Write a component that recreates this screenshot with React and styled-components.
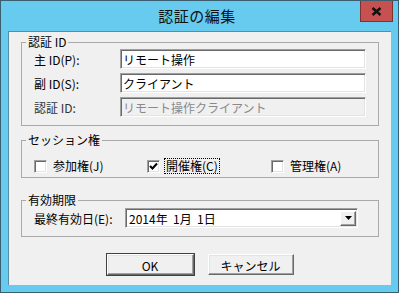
import React from 'react'
import styled, { createGlobalStyle } from 'styled-components'

const GlobalStyle = createGlobalStyle`
  html, body { margin: 0; padding: 0; background: #fff; }
  * { box-sizing: border-box; }
`

const UI = `"MS UI Gothic", "Noto Sans CJK JP", "Liberation Sans", sans-serif`

const Window = styled.div`
  width: 399px;
  height: 293px;
  border: 1px solid #3b5f70;
  background: #66cbee;
  padding: 0 7px 7px 7px;
  display: flex;
  flex-direction: column;
  font-family: ${UI};
  font-size: 12px;
  color: #000;
`

const TitleBar = styled.div`
  height: 30px;
  display: grid;
  grid-template-columns: 1fr auto 1fr;
  align-items: start;
  margin: 0 -2px 0 -7px;
`

const Title = styled.div`
  grid-column: 2;
  font-size: 15px;
  line-height: 30px;
  letter-spacing: 0.5px;
  color: #111;
`

const CloseButton = styled.div`
  grid-column: 3;
  justify-self: end;
  width: 33px;
  height: 21px;
  background: #c75050;
  border: 1px solid #7d3232;
  border-top: none;
  display: flex;
  align-items: center;
  justify-content: center;
`

const Client = styled.div`
  flex: 1;
  background: #f0f0f0;
  border-left: 1px solid #5a8ca0;
  border-top: 1px solid #5a8ca0;
  padding: 3px 12px 0 12px;
  display: flex;
  flex-direction: column;
`

const Group = styled.fieldset`
  margin: ${p => p.$top || 0}px 0 0 0;
  border: 1px solid #a9a9a9;
  padding: ${p => p.$pad};
  min-width: 0;
`

const Legend = styled.legend`
  padding: 0 2px;
  margin-left: -8px;
  line-height: 14px;
  font-size: 12px;
`

const FormGrid = styled.div`
  display: grid;
  grid-template-columns: ${p => p.$label}px 1fr;
  grid-auto-rows: 20px;
  row-gap: 4px;
  align-items: center;
`

const Label = styled.label`
  white-space: nowrap;
  padding-top: 1px;
  color: ${p => (p.$dim ? '#333' : '#000')};
`

const TextBox = styled.input`
  height: 20px;
  width: 100%;
  border: 1px solid;
  border-color: #a0a0a0 #fff #fff #a0a0a0;
  box-shadow: inset 1px 1px 0 #696969, inset -1px -1px 0 #e3e3e3;
  padding: 1px 2px 0 2px;
  font-family: ${UI};
  font-size: 12px;
  color: #000;
  background: #fff;
  outline: none;
  &:disabled {
    background: #f0f0f0;
    color: #8a8a8a;
    -webkit-text-fill-color: #8a8a8a;
  }
`

const CheckRow = styled.div`
  display: grid;
  grid-template-columns: 113px 124px 1fr;
  height: 20px;
  align-items: center;
`

const CheckItem = styled.label`
  display: flex;
  align-items: center;
  gap: 4px;
  white-space: nowrap;
`

const Box = styled.span`
  width: 13px;
  height: 13px;
  background: #fff;
  border: 1px solid;
  border-color: #a0a0a0 #fff #fff #a0a0a0;
  box-shadow: inset 1px 1px 0 #696969, inset -1px -1px 0 #e3e3e3;
  display: flex;
  align-items: center;
  justify-content: center;
`

const CheckText = styled.span`
  padding: 0 1px;
  line-height: 14px;
  border: 1px dotted ${p => (p.$focus ? '#000' : 'transparent')};
`

const Combo = styled.div`
  width: 233px;
  height: 20px;
  border: 1px solid;
  border-color: #a0a0a0 #fff #fff #a0a0a0;
  box-shadow: inset 1px 1px 0 #696969, inset -1px -1px 0 #e3e3e3;
  background: #fff;
  display: flex;
  align-items: center;
  padding: 1px 1px 1px 3px;
`

const ComboText = styled.span`
  flex: 1;
  padding-top: 1px;
`

const DropButton = styled.span`
  width: 16px;
  height: 15px;
  background: #f0f0f0;
  border: 1px solid;
  border-color: #fff #696969 #696969 #fff;
  box-shadow: inset -1px -1px 0 #a0a0a0;
  display: flex;
  align-items: center;
  justify-content: center;
`

const Buttons = styled.div`
  display: flex;
  justify-content: center;
  gap: 14px;
  margin-top: 17px;
`

const Button = styled.button`
  width: ${p => p.$w}px;
  height: 21px;
  background: #f0f0f0;
  font-family: ${UI};
  font-size: 12px;
  color: #000;
  padding: 1px 0 0 0;
  border: 1px solid;
  border-color: #fff #696969 #696969 #fff;
  box-shadow: inset -1px -1px 0 #a0a0a0, inset 1px 1px 0 #e3e3e3;
  outline: ${p => (p.$default ? '1px solid #404040' : 'none')};
`

const Check = ({ checked, focus, children }) => (
  <CheckItem>
    <Box>
      {checked && (
        <svg width="9" height="9" viewBox="0 0 9 9">
          <path d="M1 4 L3.5 6.5 L8 1.5" stroke="#000" strokeWidth="2" fill="none" />
        </svg>
      )}
    </Box>
    <CheckText $focus={focus}>{children}</CheckText>
  </CheckItem>
)

export default function App() {
  return (
    <>
      <GlobalStyle />
      <Window>
        <TitleBar>
          <Title>認証の編集</Title>
          <CloseButton>
            <svg width="11" height="9" viewBox="0 0 11 9">
              <path d="M1.5 1 L9.5 8 M9.5 1 L1.5 8" stroke="#111" strokeWidth="2.4" />
            </svg>
          </CloseButton>
        </TitleBar>
        <Client>
          <Group $pad="0 12px 8px 12px">
            <Legend>認証 ID</Legend>
            <FormGrid $label={86}>
              <Label>主 ID(P):</Label>
              <TextBox defaultValue="リモート操作" />
              <Label>副 ID(S):</Label>
              <TextBox defaultValue="クライアント" />
              <Label $dim>認証 ID:</Label>
              <TextBox disabled defaultValue="リモート操作クライアント" />
            </FormGrid>
          </Group>
          <Group $top={7} $pad="9px 12px 1px 12px">
            <Legend>セッション権</Legend>
            <CheckRow>
              <Check>参加権(J)</Check>
              <Check checked focus>開催権(C)</Check>
              <Check>管理権(A)</Check>
            </CheckRow>
          </Group>
          <Group $top={15} $pad="1px 12px 8px 12px">
            <Legend>有効期限</Legend>
            <FormGrid $label={91}>
              <Label>最終有効日(E):</Label>
              <Combo>
                <ComboText>2014年&nbsp;&nbsp;1月&nbsp;&nbsp;1日</ComboText>
                <DropButton>
                  <svg width="7" height="4" viewBox="0 0 7 4">
                    <path d="M0 0 H7 L3.5 4 Z" fill="#000" />
                  </svg>
                </DropButton>
              </Combo>
            </FormGrid>
          </Group>
          <Buttons>
            <Button $w={87} $default>OK</Button>
            <Button $w={86}>キャンセル</Button>
          </Buttons>
        </Client>
      </Window>
    </>
  )
}
